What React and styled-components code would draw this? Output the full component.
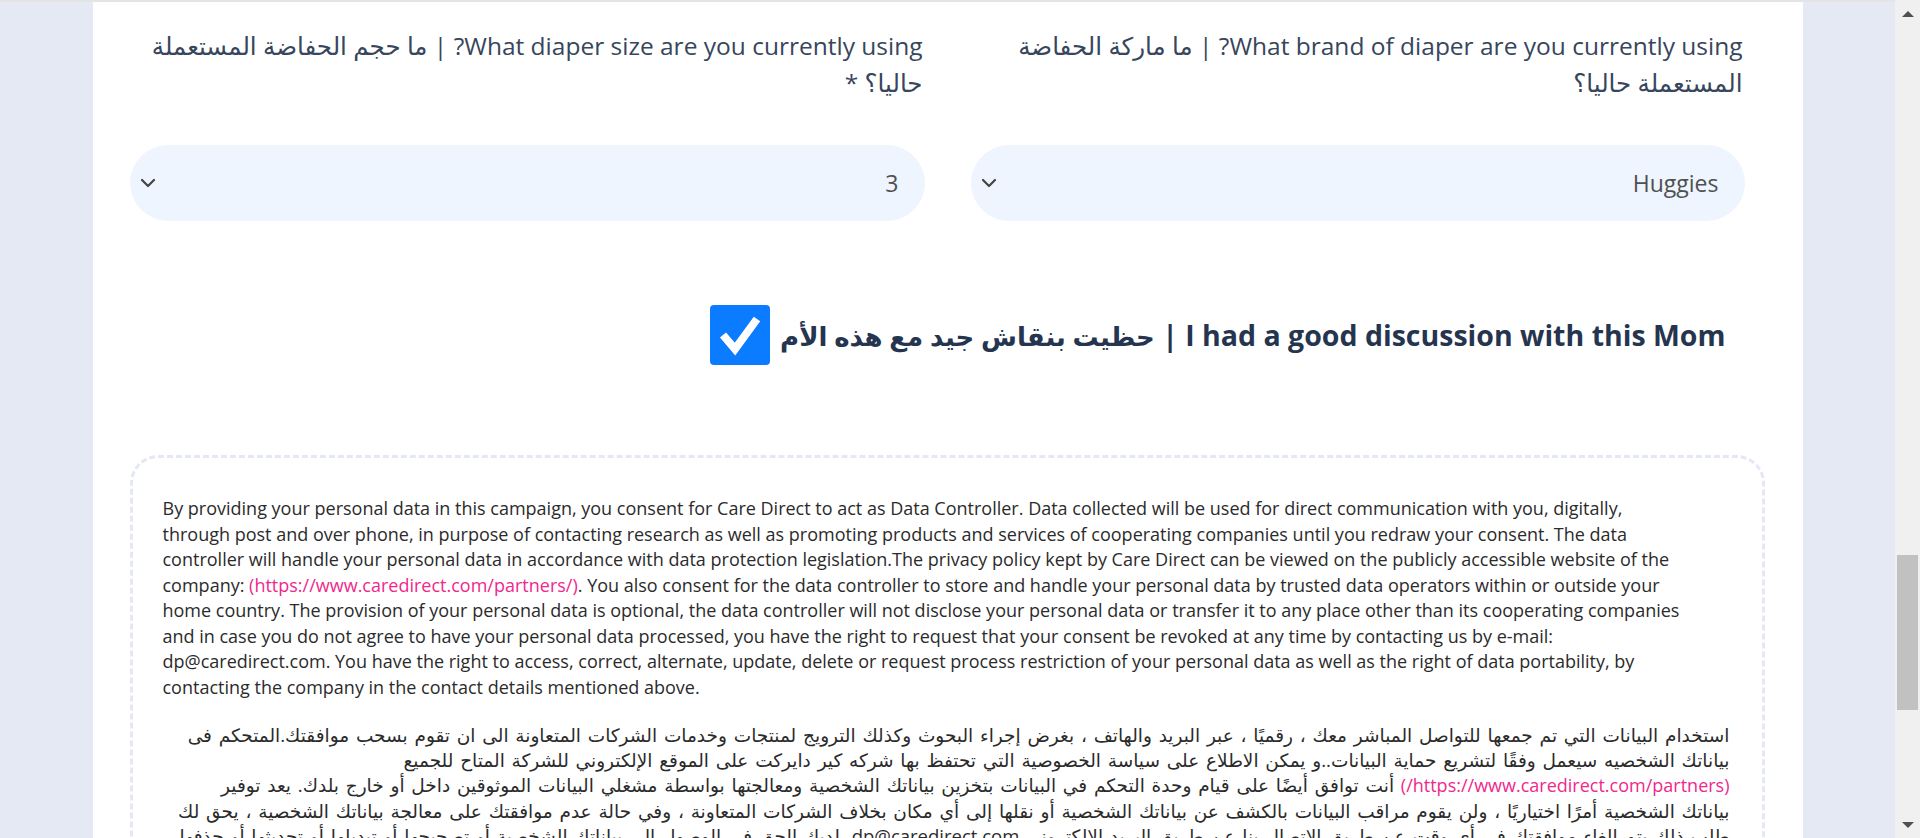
import React from 'react';
import styled, { createGlobalStyle } from 'styled-components';
import { ChevronDown } from 'lucide-react';

const GlobalStyle = createGlobalStyle`
  body {
    margin: 0;
    background: #e5e9f3;
    font-family: "Open Sans", "DejaVu Sans", sans-serif;
  }
`;

const Page = styled.div`
  display: flex;
  height: 100vh;
  overflow: hidden;
`;

const Viewport = styled.div`
  flex: 1;
  border-top: 2px solid #e4e4e4;
  overflow: hidden;
`;

const ScrollTrack = styled.div`
  width: 25px;
  flex-shrink: 0;
  background: #f0f0f0;
  display: flex;
  flex-direction: column;
  align-items: center;
  padding: 11px 0 10px;
  box-sizing: border-box;
`;

const Arrow = styled.span`
  width: 0;
  height: 0;
  border-left: 6px solid transparent;
  border-right: 6px solid transparent;
  ${({ $down }) => ($down ? 'border-top: 6px solid #505050; margin-top: auto;' : 'border-bottom: 6px solid #505050;')}
`;

const Thumb = styled.span`
  width: 21px;
  height: 155px;
  background: #c1c1c1;
  margin-top: 538px;
`;

const Card = styled.main`
  width: 1710px;
  margin: 0 auto;
  background: #fff;
  box-sizing: border-box;
  padding: 25px 38px 60px 37px;
`;

const FieldsGrid = styled.div`
  display: grid;
  grid-template-columns: 774px 1fr;
  column-gap: 46px;
  padding-right: 20px;
`;

const Field = styled.div`
  display: flex;
  flex-direction: column;
`;

const Label = styled.label`
  font-size: 24.5px;
  line-height: 37px;
  color: #37465c;
  min-height: 74px;
  padding-right: 2px;
`;

const SelectWrap = styled.div`
  position: relative;
  margin-top: 44px;
`;

const Select = styled.select`
  appearance: none;
  width: 100%;
  height: 76px;
  border: none;
  border-radius: 38px;
  background: #eef5fe;
  padding: 0 26px 0 50px;
  font-family: "Open Sans", "DejaVu Sans", sans-serif;
  font-size: 23px;
  color: #505050;
  outline: none;
`;

const Chevron = styled(ChevronDown)`
  position: absolute;
  left: 6px;
  top: 50%;
  transform: translateY(-50%);
  color: #444;
  pointer-events: none;
`;

const CheckRow = styled.div`
  display: flex;
  align-items: center;
  gap: 10px;
  margin-top: 84px;
  padding-right: 39px;
`;

const CheckText = styled.span`
  font-size: 28.5px;
  font-weight: 700;
  color: #26354f;
`;

const ArabicPart = styled.span`
  font-size: 26px;
`;

const CheckBox = styled.span`
  width: 60px;
  height: 60px;
  border-radius: 4px;
  background: #0b7bff;
  display: flex;
  align-items: center;
  justify-content: center;
  flex-shrink: 0;
`;

const Consent = styled.section`
  margin-top: 90px;
  border: 3px dashed #e3e8f4;
  border-radius: 28px;
  padding: 38px 32px 40px 30px;
  color: #2b2b2b;
  font-size: 18px;
  line-height: 25.5px;
`;

const Paragraph = styled.p`
  margin: ${({ $first }) => ($first ? '0' : '22px 0 0')};
  text-align: ${({ $ltr }) => ($ltr ? 'left' : 'right')};
  white-space: nowrap;
  font-size: ${({ $ltr }) => ($ltr ? '18px' : '18.5px')};
  line-height: ${({ $ltr }) => ($ltr ? '25.5px' : '25px')};
  word-spacing: ${({ $ltr }) => ($ltr ? '0' : '2px')};
`;

const Link = styled.a`
  color: #f0288c;
  text-decoration: none;
  font-size: 18px;
  word-spacing: 0;
`;

const LINK = '(https://www.caredirect.com/partners/)';

const englishLines = [
  'By providing your personal data in this campaign, you consent for Care Direct to act as Data Controller. Data collected will be used for direct communication with you, digitally,',
  'through post and over phone, in purpose of contacting research as well as promoting products and services of cooperating companies until you redraw your consent. The data',
  'controller will handle your personal data in accordance with data protection legislation.The privacy policy kept by Care Direct can be viewed on the publicly accessible website of the',
  ['company: ', LINK, '. You also consent for the data controller to store and handle your personal data by trusted data operators within or outside your'],
  'home country. The provision of your personal data is optional, the data controller will not disclose your personal data or transfer it to any place other than its cooperating companies',
  'and in case you do not agree to have your personal data processed, you have the right to request that your consent be revoked at any time by contacting us by e-mail:',
  'dp@caredirect.com. You have the right to access, correct, alternate, update, delete or request process restriction of your personal data as well as the right of data portability, by',
  'contacting the company in the contact details mentioned above.',
];

const arabicLines = [
  'استخدام البيانات التي تم جمعها للتواصل المباشر معك ، رقميًا ، عبر البريد والهاتف ، بغرض إجراء البحوث وكذلك الترويج لمنتجات وخدمات الشركات المتعاونة الى ان تقوم بسحب موافقتك.المتحكم فى',
  'بياناتك الشخصيه سيعمل وفقًا لتشريع حماية البيانات..و يمكن الاطلاع على سياسة الخصوصية التي تحتفظ بها شركه كير دايركت على الموقع الإلكتروني للشركة المتاح للجميع',
  ['', LINK, ' أنت توافق أيضًا على قيام وحدة التحكم في البيانات بتخزين بياناتك الشخصية ومعالجتها بواسطة مشغلي البيانات الموثوقين داخل أو خارج بلدك. يعد توفير'],
  'بياناتك الشخصية أمرًا اختياريًا ، ولن يقوم مراقب البيانات بالكشف عن بياناتك الشخصية أو نقلها إلى أي مكان بخلاف الشركات المتعاونة ، وفي حالة عدم موافقتك على معالجة بياناتك الشخصية ، يحق لك',
  'طلب ذلك يتم إلغاء موافقتك في أي وقت عن طريق الاتصال بنا عن طريق البريد الإلكتروني dp@caredirect.com. لديك الحق في الوصول إلى بياناتك الشخصية أو تصحيحها أو تبديلها أو تحديثها أو حذفها',
  'أو طلب تقييد معالجتها بالإضافة إلى الحق في نقل البيانات ، عن طريق الاتصال بالشركة في تفاصيل الاتصال المذكورة أعلاه.',
];

function renderLines(lines) {
  return lines.map((line, i) => (
    <React.Fragment key={i}>
      {Array.isArray(line) ? (
        <>
          {line[0]}
          <Link href="#">{line[1]}</Link>
          {line[2]}
        </>
      ) : (
        line
      )}
      {i < lines.length - 1 && <br />}
    </React.Fragment>
  ));
}

function SelectField({ label, value, options }) {
  return (
    <Field>
      <Label>{label}</Label>
      <SelectWrap>
        <Select value={value} onChange={() => {}}>
          {options.map((o) => (
            <option key={o} value={o}>{o}</option>
          ))}
        </Select>
        <Chevron size={24} strokeWidth={2.2} />
      </SelectWrap>
    </Field>
  );
}

export default function App() {
  return (
    <>
      <GlobalStyle />
      <Page>
        <Viewport dir="rtl">
          <Card>
            <FieldsGrid>
              <SelectField
                label="What brand of diaper are you currently using? | ما ماركة الحفاضة المستعملة حاليا؟"
                value="Huggies"
                options={['Huggies', 'Pampers', 'Molfix', 'Other']}
              />
              <SelectField
                label="What diaper size are you currently using? | ما حجم الحفاضة المستعملة حاليا؟ *"
                value="3"
                options={['1', '2', '3', '4', '5', '6']}
              />
            </FieldsGrid>

            <CheckRow>
              <CheckText>I had a good discussion with this Mom | <ArabicPart>حظيت بنقاش جيد مع هذه الأم</ArabicPart></CheckText>
              <CheckBox role="checkbox" aria-checked="true">
                <svg width="60" height="60" viewBox="0 0 60 60">
                  <polyline points="13,30 25,44 47,14" fill="none" stroke="#fff" strokeWidth="8" strokeLinejoin="miter" />
                </svg>
              </CheckBox>
            </CheckRow>

            <Consent>
              <Paragraph $first $ltr dir="ltr">{renderLines(englishLines)}</Paragraph>
              <Paragraph>{renderLines(arabicLines)}</Paragraph>
            </Consent>
          </Card>
        </Viewport>
        <ScrollTrack aria-hidden="true">
          <Arrow />
          <Thumb />
          <Arrow $down />
        </ScrollTrack>
      </Page>
    </>
  );
}
